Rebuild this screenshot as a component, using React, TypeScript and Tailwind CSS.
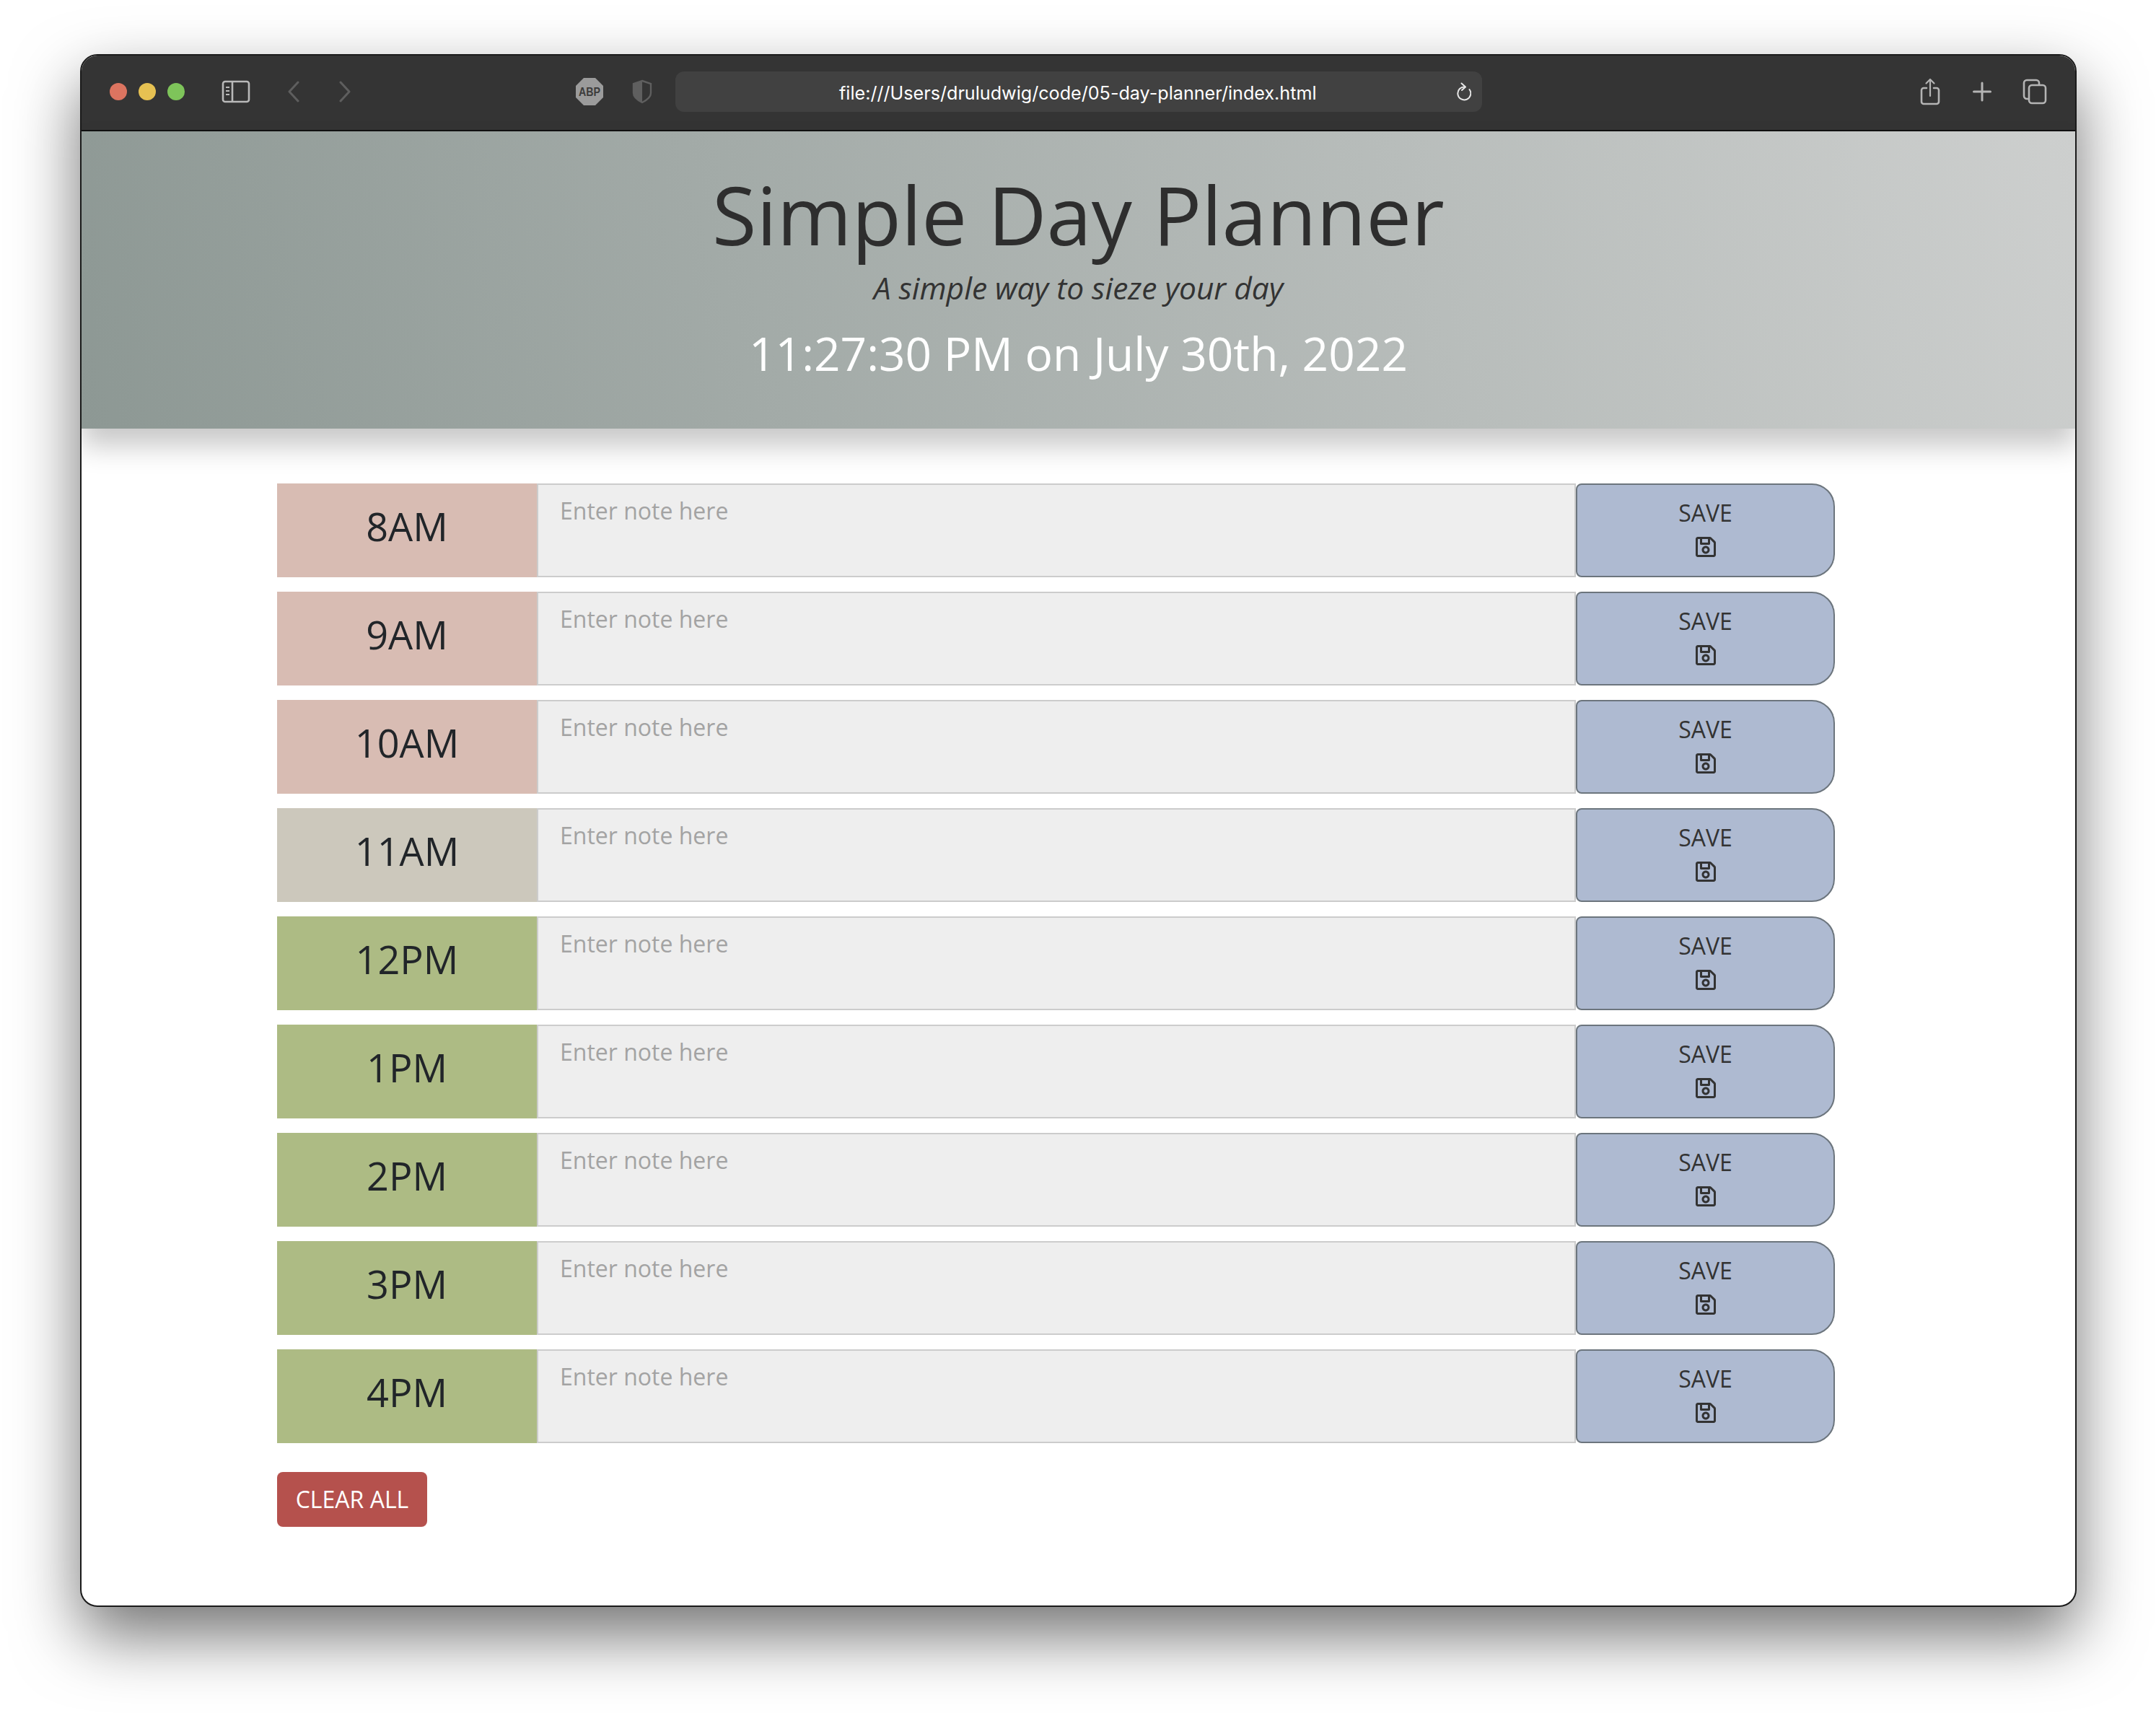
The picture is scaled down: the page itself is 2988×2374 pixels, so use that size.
import React from "react";
import { FaRegSave } from "react-icons/fa";

const hours: [string, string][] = [
  ["8AM", "bg-[#d8bcb3]"],
  ["9AM", "bg-[#d8bcb3]"],
  ["10AM", "bg-[#d8bcb3]"],
  ["11AM", "bg-[#ccc8bc]"],
  ["12PM", "bg-[#adbb84]"],
  ["1PM", "bg-[#adbb84]"],
  ["2PM", "bg-[#adbb84]"],
  ["3PM", "bg-[#adbb84]"],
  ["4PM", "bg-[#adbb84]"],
];

function Row({ label, color }: { label: string; color: string }) {
  return (
    <div className="flex h-[130px] w-[2159px]">
      <div className={`w-[360px] h-full flex items-center justify-center text-[54px] leading-none text-[#212529] ${color}`}>
        <span className="relative top-[-6px]">{label}</span>
      </div>
      <textarea
        readOnly
        placeholder="Enter note here"
        className="w-[1440px] h-full resize-none border-2 border-[#cccccc] bg-[#eeeeee] pl-[30px] pt-[12px] text-[32px] leading-[48px] placeholder:text-[#a3a3a3] outline-none"
      />
      <button className="w-[359px] h-full flex flex-col items-center bg-[#aebad1] border-2 border-[#6c757d] rounded-tl-[8px] rounded-bl-[8px] rounded-tr-[32px] rounded-br-[32px] text-[#333333] text-[32px] leading-[48px] pt-[15px]">
        <span>SAVE</span>
        <FaRegSave className="w-[32px] h-[32px] mt-[7px]" />
      </button>
    </div>
  );
}

function Sidebar() {
  return (
    <svg className="shrink-0" width="40" height="32" viewBox="0 0 40 32" fill="none" stroke="#b9b9b9" strokeWidth="2.6">
      <rect x="2" y="2" width="36" height="28" rx="3" />
      <path d="M15 2v28" />
      <path d="M6 10h5M6 15h5M6 20h5" strokeWidth="2" />
    </svg>
  );
}

export default function App() {
  return (
    <div className="w-[2988px] h-[2374px] bg-white pt-[75px] pl-[111px] font-['Open_Sans',sans-serif] overflow-hidden">
      <div className="w-[2767px] h-[2152px] bg-white border-2 border-[#1a1a1a] rounded-[24px] overflow-hidden shadow-[0_40px_90px_rgba(0,0,0,0.55)] flex flex-col">
        <div className="h-[105px] shrink-0 bg-[#343434] border-b-2 border-[#111111] flex items-center pl-[39px] pb-[3px]">
          <div className="shrink-0 w-[24px] h-[24px] rounded-full bg-[#dc7460]" />
          <div className="shrink-0 w-[24px] h-[24px] rounded-full bg-[#e6c152] ml-[16px]" />
          <div className="shrink-0 w-[24px] h-[24px] rounded-full bg-[#7ec45a] ml-[16px]" />
          <div className="shrink-0 ml-[51px]"><Sidebar /></div>
          <svg className="shrink-0 ml-[51px]" width="18" height="30" viewBox="0 0 18 30" fill="none" stroke="#5e5e5e" strokeWidth="3" strokeLinecap="round" strokeLinejoin="round">
            <path d="M15 2 3 15l12 13" />
          </svg>
          <svg className="shrink-0 ml-[53px]" width="18" height="30" viewBox="0 0 18 30" fill="none" stroke="#5e5e5e" strokeWidth="3" strokeLinecap="round" strokeLinejoin="round">
            <path d="m3 2 12 13L3 28" />
          </svg>
          <svg className="shrink-0 ml-[310px]" width="40" height="40" viewBox="0 0 40 40">
            <polygon points="12,1 28,1 39,12 39,28 28,39 12,39 1,28 1,12" fill="#9b9b9b" />
            <text x="20" y="26" textAnchor="middle" fontSize="17" fontWeight="700" fontFamily="'Liberation Sans',sans-serif" fill="#3c3c3c" textLength="30" lengthAdjust="spacingAndGlyphs">ABP</text>
          </svg>
          <svg className="shrink-0 ml-[39px]" width="28" height="34" viewBox="0 0 28 34" fill="none">
            <path d="M14 2 26 6v13c0 6-6 10-12 13C8 29 2 25 2 19V6Z" stroke="#5f5f5f" strokeWidth="2.4" />
            <path d="M14 2 2 6v13c0 6 6 10 12 13Z" fill="#5f5f5f" />
          </svg>
          <div className="shrink-0 ml-[32px] w-[1118px] h-[56px] rounded-[12px] bg-[#414141] relative">
            <span className="absolute left-[227px] top-[14px] text-[25.15px] leading-[32px] font-['Inter',sans-serif] text-white whitespace-nowrap">file:///Users/druludwig/code/05-day-planner/index.html</span>
            <svg className="absolute left-[1081px] top-[15px]" width="22" height="28" viewBox="0 0 22 28" fill="none" stroke="#e6e6e6" strokeWidth="2" strokeLinecap="round" strokeLinejoin="round">
              <path d="M13.5 6.5A9 9 0 1 0 19.5 10" />
              <path d="M8.5 1.5l5.5 5-5 4.5" />
            </svg>
          </div>
          <svg className="shrink-0 ml-[607px]" width="28" height="38" viewBox="0 0 28 38" fill="none" stroke="#b4b4b4" strokeWidth="2.6" strokeLinecap="round" strokeLinejoin="round">
            <path d="M9 14H5a3 3 0 0 0-3 3v16a3 3 0 0 0 3 3h18a3 3 0 0 0 3-3V17a3 3 0 0 0-3-3h-4" />
            <path d="M14 25V2M8.5 7.5 14 2l5.5 5.5" strokeWidth="2.2" />
          </svg>
          <svg className="shrink-0 ml-[45px]" width="26" height="28" viewBox="0 0 26 28" fill="none" stroke="#b4b4b4" strokeWidth="3" strokeLinecap="round">
            <path d="M13 2v24M1.5 14h23" />
          </svg>
          <svg className="shrink-0 ml-[43px]" width="34" height="36" viewBox="0 0 34 36" fill="none" stroke="#b4b4b4" strokeWidth="2.6">
            <path d="M9 28H6a4 4 0 0 1-4-4V6a4 4 0 0 1 4-4h13a4 4 0 0 1 4 4v3" />
            <rect x="9" y="9" width="23" height="25" rx="4" />
          </svg>
        </div>

        <header className="h-[412px] shrink-0 bg-[linear-gradient(75deg,#8d9894_0%,#cdcfce_100%)] shadow-[0_24px_36px_rgba(0,0,0,0.22)] flex flex-col items-center">
          <h1 className="text-[112px] leading-[152px] mt-[-9px] text-[#2e2e2e] pt-[48px]">Simple Day Planner</h1>
          <p className="text-[42.5px] leading-[60px] italic text-[#333333] mt-[-4px]">A simple way to sieze your day</p>
          <p className="text-[64px] leading-[88px] text-white mt-[17px]">11:27:30 PM on July 30th, 2022</p>
        </header>

        <main className="pl-[271px] pt-[76px] flex flex-col gap-[20px]">
          {hours.map(([label, color]) => (
            <Row key={label} label={label} color={color} />
          ))}
          <button className="mt-[20px] w-[208px] h-[76px] rounded-[8px] bg-[#b5514d] text-white text-[32px]">CLEAR ALL</button>
        </main>
      </div>
    </div>
  );
}
